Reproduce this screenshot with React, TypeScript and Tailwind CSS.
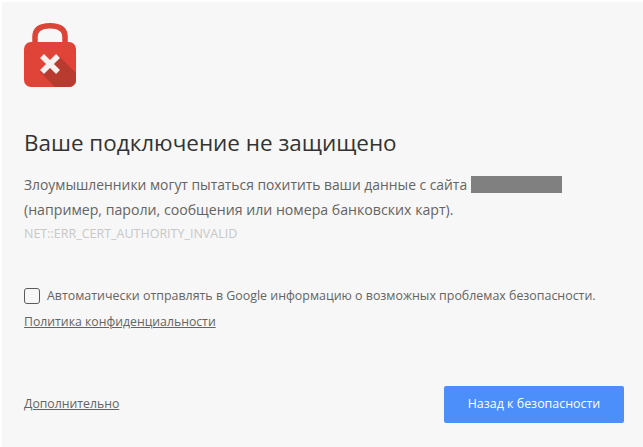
function LockIcon() {
  return (
    <svg width="52" height="64" viewBox="0 0 52 64">
      <path d="M11 21 V14 C11 6 17 2.75 26 2.75 C35 2.75 41 6 41 14 V21" fill="none" stroke="#db4437" strokeWidth="5.5" />
      <rect x="0" y="19" width="52" height="45" rx="7" fill="#e04438" />
      <path d="M36 34 L52 50 V57 A7 7 0 0 1 45 64 H31 L16 49 Z" fill="#b93a2f" />
      <path d="M18 33 L34 49 M34 33 L18 49" stroke="#f6f0ee" strokeWidth="5.5" />
    </svg>
  );
}

export default function App() {
  return (
    <div className="w-[643px] h-[447px] bg-white pl-[2px] pt-[2px] font-['Open_Sans','Noto_Sans',sans-serif]">
      <div className="w-[641px] h-[445px] bg-[#f7f7f7] pl-[22px] pr-[19px] pt-[21px] flex flex-col">
        <LockIcon />
        <h1 className="mt-[41px] text-[22.45px] leading-[30px] font-normal text-[#333333] whitespace-nowrap">Ваше подключение не защищено</h1>
        <div className="mt-[14px] leading-[25px] text-[#646464]">
          <p className="text-[13.85px] whitespace-nowrap">
            Злоумышленники могут пытаться похитить ваши данные с сайта{" "}
            <span className="inline-block w-[91px] h-[17px] bg-[#808080] align-[-3px]"></span>
          </p>
          <p className="text-[14.15px]">(например, пароли, сообщения или номера банковских карт).</p>
        </div>
        <p className="mt-[3px] text-[12.5px] leading-[18px] text-[#c8c8c8]">NET::ERR_CERT_AUTHORITY_INVALID</p>
        <label className="mt-[43px] flex items-center gap-[7px] text-[12.42px] leading-[20px] text-[#646464] whitespace-nowrap">
          <span className="w-[16px] h-[16px] rounded-[3px] border border-[#5a5a5a] bg-[#f7f7f7]"></span>
          Автоматически отправлять в Google информацию о возможных проблемах безопасности.
        </label>
        <a className="mt-[6px] text-[12.26px] leading-[20px] text-[#646464] underline self-start">Политика конфиденциальности</a>
        <div className="mt-auto mb-[24px] flex items-center justify-between">
          <a className="text-[12.25px] text-[#646464] underline">Дополнительно</a>
          <button className="w-[180px] h-[37px] rounded-[2px] bg-[#4c8efa] text-white text-[12.45px]">Назад к безопасности</button>
        </div>
      </div>
    </div>
  );
}
